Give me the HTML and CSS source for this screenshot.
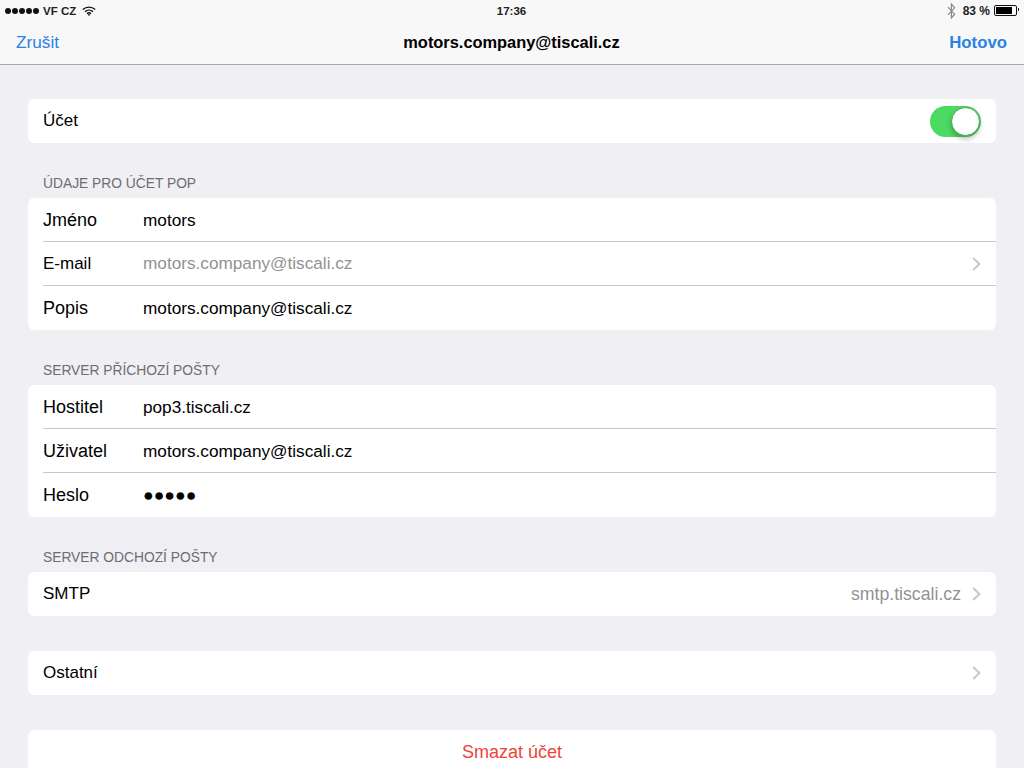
FILE: index.html
```html
<!DOCTYPE html>
<html lang="cs">
<head>
<meta charset="UTF-8">
<title>motors.company@tiscali.cz</title>
<link rel="stylesheet" href="styles.css">
</head>
<body>
    <div class="header">
        <div class="status">
            <div class="status-left">
                <span class="signal"><i></i><i></i><i></i><i></i><i></i></span>
                <span>VF CZ</span>
                <svg class="wifi" width="14" height="10" viewBox="0 0 14 10">
                    <path d="M.8 3.6C4.3 .3 9.7 .3 13.2 3.6M3 5.7C5.3 3.6 8.7 3.6 11 5.7M5 7.6C6.2 6.6 7.8 6.6 9 7.6" fill="none" stroke="#111" stroke-width="1.4"/>
                    <path d="M7 10L5.6 8.5C6.5 8 7.5 8 8.4 8.5Z" fill="#111"/>
                </svg>
            </div>
            <div class="status-time">17:36</div>
            <div class="status-right">
                <svg class="bt" width="9" height="16" viewBox="0 0 9 16">
                    <path d="M1 4.2L7.6 11.2L4.4 15V1L7.6 4.8L1 11.8" fill="none" stroke="#8a8a8a" stroke-width="1.2"/>
                </svg>
                <span>83 %</span>
                <span class="battery"><span class="battery-level"></span></span>
            </div>
        </div>
        <div class="nav">
            <a class="nav-btn">Zrušit</a>
            <div class="nav-title">motors.company@tiscali.cz</div>
            <a class="nav-btn nav-done">Hotovo</a>
        </div>
    </div>

    <div class="content">
        <div class="group">
            <div class="row">
                <span class="label">Účet</span>
                <span class="switch"><span class="knob"></span></span>
            </div>
        </div>

        <div class="section-title">ÚDAJE PRO ÚČET POP</div>
        <div class="group">
            <div class="row low"><span class="label large">Jméno</span><span class="value">motors</span></div>
            <div class="row"><span class="label">E-mail</span><span class="value muted">motors.company@tiscali.cz</span>
                <svg class="chevron" width="9" height="14" viewBox="0 0 9 14"><path d="M1.2 1L7.4 7L1.2 13" fill="none" stroke="#c7c7cc" stroke-width="2"/></svg>
            </div>
            <div class="row"><span class="label large">Popis</span><span class="value">motors.company@tiscali.cz</span></div>
        </div>

        <div class="section-title">SERVER PŘÍCHOZÍ POŠTY</div>
        <div class="group">
            <div class="row low"><span class="label large">Hostitel</span><span class="value">pop3.tiscali.cz</span></div>
            <div class="row low"><span class="label large">Uživatel</span><span class="value">motors.company@tiscali.cz</span></div>
            <div class="row"><span class="label large">Heslo</span><span class="value dots">●●●●●</span></div>
        </div>

        <div class="section-title">SERVER ODCHOZÍ POŠTY</div>
        <div class="group">
            <div class="row"><span class="label">SMTP</span><span class="detail muted">smtp.tiscali.cz</span>
                <svg class="chevron" width="9" height="14" viewBox="0 0 9 14"><path d="M1.2 1L7.4 7L1.2 13" fill="none" stroke="#c7c7cc" stroke-width="2"/></svg>
            </div>
        </div>

        <div class="group spaced">
            <div class="row"><span class="label">Ostatní</span><span class="detail"></span>
                <svg class="chevron" width="9" height="14" viewBox="0 0 9 14"><path d="M1.2 1L7.4 7L1.2 13" fill="none" stroke="#c7c7cc" stroke-width="2"/></svg>
            </div>
        </div>

        <div class="group spaced">
            <div class="row delete">Smazat účet</div>
        </div>
    </div>
</body>
</html>
```

FILE: styles.css
```css
body {
    margin: 0;
    height: 768px;
    overflow: hidden;
    background: #efeff4;
    font-family: "Liberation Sans", Arial, sans-serif;
    color: #000;
}

/* top bar */
.header {
    height: 64px;
    background: #f8f8f8;
    border-bottom: 1px solid #a9a9ab;
}
.status {
    height: 21px;
    padding: 0 6px 0 5px;
    display: flex;
    align-items: center;
    justify-content: space-between;
    font-size: 11.5px;
    font-weight: bold;
    color: #222;
}
.status-left, .status-right {
    width: 300px;
    display: flex;
    align-items: center;
}
.status-right {
    justify-content: flex-end;
    font-size: 12px;
}
.signal {
    display: flex;
    gap: 1px;
    margin-right: 4px;
}
.signal i {
    width: 6px;
    height: 6px;
    border-radius: 50%;
    background: #111;
}
.wifi {
    margin-left: 6px;
}
.bt {
    margin-right: 7px;
}
.battery {
    width: 19px;
    height: 7px;
    margin-left: 4px;
    margin-right: 1px;
    padding: 1px;
    border: 1px solid #111;
    border-radius: 2px;
    position: relative;
}
.battery:after {
    content: "";
    position: absolute;
    right: -3px;
    top: 2px;
    width: 1px;
    height: 3px;
    background: #111;
}
.battery-level {
    display: block;
    width: 16px;
    height: 7px;
    background: #000;
}
.nav {
    height: 43px;
    padding: 0 17px 0 16px;
    display: grid;
    grid-template-columns: 1fr auto 1fr;
    align-items: center;
}
.nav-btn {
    font-size: 17.2px;
    color: #2b80e6;
}
.nav-done {
    font-weight: bold;
    font-size: 16.8px;
    text-align: right;
}
.nav-title {
    font-size: 16.4px;
    font-weight: bold;
}

/* settings groups */
.content {
    padding: 34px 28px 0;
}
.group {
    background: #fff;
    border-radius: 6px;
    overflow: hidden;
}
.spaced {
    margin-top: 35px;
}
.section-title {
    margin: 34px 0 7px;
    padding-left: 15px;
    height: 14px;
    line-height: 14px;
    font-size: 13.8px;
    color: #6d6d72;
}
.row {
    height: 44px;
    margin-left: 15px;
    padding-right: 15px;
    display: flex;
    align-items: center;
    font-size: 17px;
    border-bottom: 1px solid #c8c7cc;
    box-sizing: border-box;
}
.row:last-child {
    border-bottom: none;
}
.low {
    padding-top: 1px;
}
.label {
    width: 100px;
}
.large {
    font-size: 18px;
}
.value {
    flex: 1;
    font-size: 17.2px;
}
.detail {
    flex: 1;
    text-align: right;
    margin-right: 11px;
    font-size: 17.7px;
}
.muted {
    color: #929292;
}
.dots {
    font-size: 17.7px;
}
.chevron {
    display: block;
}
.switch {
    width: 51px;
    height: 31px;
    margin-left: auto;
    border-radius: 16px;
    background: #4cd964;
    position: relative;
}
.knob {
    position: absolute;
    right: 1px;
    top: 1px;
    width: 27px;
    height: 27px;
    background: #fff;
    border: 1px solid #3fa650;
    border-radius: 50%;
    box-shadow: 0 3px 5px rgba(0, 0, 0, 0.25);
}
.delete {
    margin-left: 0;
    padding: 0;
    justify-content: center;
    color: #f0433a;
    font-size: 18px;
}
```
